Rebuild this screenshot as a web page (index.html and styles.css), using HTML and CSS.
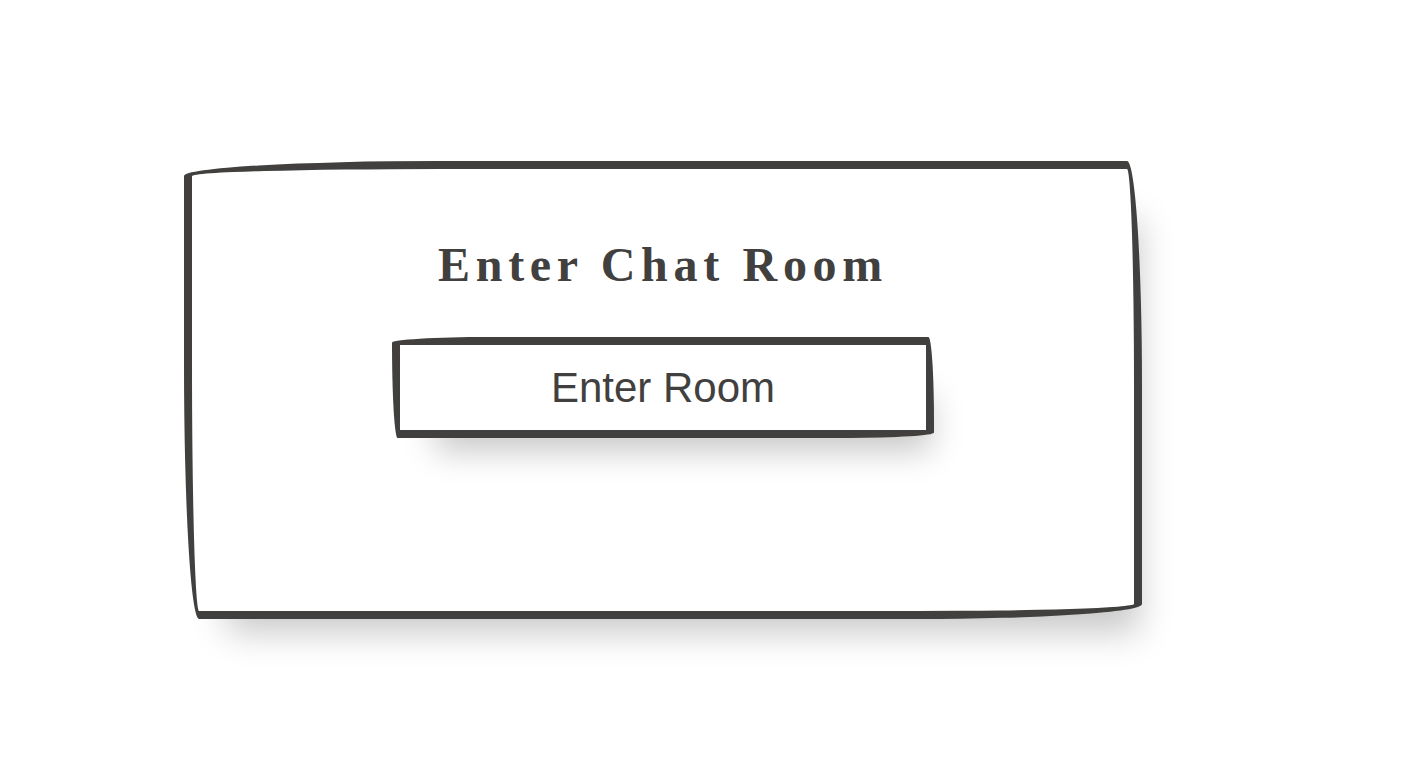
FILE: index.html
```html
<!DOCTYPE html>
<html lang="en">
<head>
<meta charset="utf-8">
<title>Enter Chat Room</title>
<link rel="stylesheet" href="styles.css">
</head>
<body>
<main class="page">
  <section class="card">
    <h1 class="title">Enter Chat Room</h1>
    <button class="enter-btn" type="button">Enter Room</button>
  </section>
</main>
</body>
</html>
```

FILE: styles.css
```css
html, body {
  margin: 0;
  padding: 0;
  background: #ffffff;
}

.page {
  box-sizing: border-box;
  min-height: 100vh;
  padding: 161px 0 0 184px;
}

.card {
  box-sizing: border-box;
  width: 958px;
  height: 458px;
  border: 8px solid #41403e;
  border-radius: 255px 15px 225px 15px / 15px 225px 15px 255px;
  box-shadow: 20px 36px 33px -23px rgba(0, 0, 0, 0.22);
  background: #fff;
  display: flex;
  flex-direction: column;
  align-items: center;
  padding-top: 66px;
}

.title {
  margin: 0;
  font-family: "Liberation Serif", "Times New Roman", serif;
  font-weight: bold;
  font-size: 48px;
  line-height: 60px;
  letter-spacing: 5.7px;
  color: #41403e;
}

.enter-btn {
  box-sizing: border-box;
  margin-top: 42px;
  width: 542px;
  height: 101px;
  border: 8px solid #41403e;
  border-radius: 255px 15px 225px 15px / 15px 225px 15px 255px;
  box-shadow: 20px 36px 33px -23px rgba(0, 0, 0, 0.22);
  background: #fff;
  font-family: "Liberation Sans", Arial, sans-serif;
  font-size: 42px;
  color: #41403e;
  padding: 0;
  cursor: pointer;
}
```
